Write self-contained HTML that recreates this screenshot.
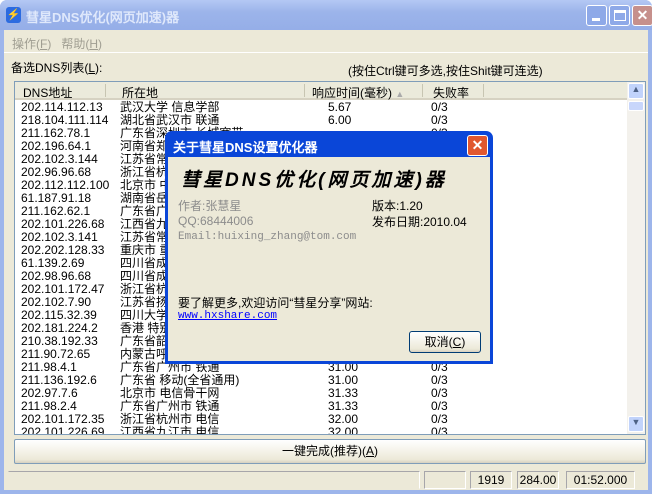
<!DOCTYPE html>
<html><head><meta charset="utf-8"><style>
*{margin:0;padding:0;box-sizing:border-box}
body{width:657px;height:494px;background:#fff;position:relative;overflow:hidden;font:12px "Liberation Sans","WenQuanYi Zen Hei",sans-serif;color:#000}
.win{position:absolute;left:0;top:0;width:652px;height:494px;background:#9db5eb;border-radius:7px 7px 0 0}
.title{position:absolute;left:0;top:0;width:652px;height:30px;background:linear-gradient(#b4c8f4,#9cb4ea 40%,#95aee8);border-radius:7px 7px 0 0}
.title .t{position:absolute;left:26px;top:7px;color:#dfe8fb;font-weight:bold;font-size:13px}
.body{position:absolute;left:4px;top:30px;width:644px;height:460px;background:#ece9d8}
.tb{position:absolute;top:5px;width:21px;height:21px;border:1px solid #fff;border-radius:3px;background:#8ea9e8;color:#fff;text-align:center;font-weight:bold}
.a{position:absolute;white-space:nowrap}
.list{position:absolute;left:14px;top:81px;width:632px;height:354px;background:#fff;border:1px solid #7f9db9;overflow:hidden}
.hdr{position:absolute;left:0;top:0;width:612px;height:18px;background:#ebeadb;border-bottom:2px solid #d6d2c2}
.row{position:absolute;left:0;height:13px;line-height:13px;font-size:12px}
.dlg{position:absolute;left:165px;top:131px;width:328px;height:233px;background:#0a46d8;border-radius:7px 7px 0 0}
.dlg .in{position:absolute;left:3px;top:26px;width:322px;height:204px;background:#ece9d8}
.btn{position:absolute;border:1px solid #003c74;border-radius:3px;background:linear-gradient(#fff,#ece9d8 85%,#d6d0c0);text-align:center}
.gray{color:#8c8c8c}
.sb{position:absolute;top:2px;height:18px;border:1px solid #a7a6aa;border-right-color:#fff;border-bottom-color:#fff;text-align:center;line-height:16px}
</style></head><body>
<div class="win">
<div class="title">
 <div style="position:absolute;left:6px;top:7px;width:15px;height:16px;background:#2c6be0;border-radius:3px;color:#fff;font-size:11px;text-align:center;line-height:16px">⚡</div>
 <div class="t">彗星DNS优化(网页加速)器</div>
 <div class="tb" style="left:586px"><div style="position:absolute;left:5px;top:12px;width:8px;height:3px;background:#fff"></div></div>
 <div class="tb" style="left:609px"><div style="position:absolute;left:4px;top:4px;width:12px;height:11px;border:1px solid #fff;border-top-width:3px"></div></div>
 <div class="tb" style="left:632px;background:#c6908c;line-height:19px;font-size:14px">✕</div>
</div>
<div class="body"></div>
</div>
<div class="a gray" style="left:12px;top:35px;color:#a09e92">操作(<u>F</u>)&nbsp;&nbsp;&nbsp;帮助(<u>H</u>)</div>
<div style="position:absolute;left:4px;top:52px;width:644px;height:1px;background:#fff"></div>
<div class="a" style="left:11px;top:59px">备选DNS列表(<u>L</u>):</div>
<div class="a" style="left:348px;top:62px">(按住Ctrl键可多选,按住Shit键可连选)</div>
<div class="list">
 <div class="hdr">
  <div class="a" style="left:8px;top:2px">DNS地址</div>
  <div class="a" style="left:107px;top:2px">所在地</div>
  <div class="a" style="left:297px;top:2px">响应时间(毫秒) <span style="color:#aaa;font-size:9px">▲</span></div>
  <div class="a" style="left:418px;top:2px">失败率</div>
  <div style="position:absolute;left:90px;top:2px;width:1px;height:13px;background:#c7c5b2"></div>
  <div style="position:absolute;left:289px;top:2px;width:1px;height:13px;background:#c7c5b2"></div>
  <div style="position:absolute;left:407px;top:2px;width:1px;height:13px;background:#c7c5b2"></div>
  <div style="position:absolute;left:468px;top:2px;width:1px;height:13px;background:#c7c5b2"></div>
 </div>
 <div style="position:absolute;left:612px;top:0;width:18px;height:352px;background:#f3f1ec">
  <div style="position:absolute;left:1px;top:1px;width:16px;height:16px;background:#c1d3fb;border:1px solid #fff;border-radius:2px;text-align:center;font-size:9px;color:#4d6185">▲</div>
  <div style="position:absolute;left:1px;top:19px;width:16px;height:10px;background:#c8d6fb;border:1px solid #fff;border-radius:2px"></div>
  <div style="position:absolute;left:1px;top:334px;width:16px;height:16px;background:#c1d3fb;border:1px solid #fff;border-radius:2px;text-align:center;font-size:9px;color:#4d6185">▼</div>
 </div>
 <div id="rows"></div>
</div>
<div class="btn" style="left:14px;top:439px;width:632px;height:25px;line-height:23px;border-color:#7f9db9;border-radius:2px">一键完成(推荐)(<u>A</u>)</div>
<div style="position:absolute;left:0;top:469px;width:648px;height:21px">
 <div class="sb" style="left:8px;width:412px;border-left-color:#ece9d8;border-bottom-color:#ece9d8"></div>
 <div class="sb" style="left:424px;width:42px"></div>
 <div class="sb" style="left:470px;width:42px">1919</div>
 <div class="sb" style="left:517px;width:42px">284.00</div>
 <div class="sb" style="left:566px;width:69px">01:52.000</div>
</div>
<div class="dlg">
 <div class="a" style="left:8px;top:6px;color:#fff;font-weight:bold;font-size:13px">关于彗星DNS设置优化器</div>
 <div style="position:absolute;left:302px;top:4px;width:21px;height:21px;border:1px solid #fff;border-radius:3px;background:#e0572f;color:#fff;text-align:center;line-height:19px;font-size:14px;font-weight:bold">✕</div>
 <div class="in">
  <div class="a" style="left:13px;top:8px;font-size:19px;font-weight:bold;font-style:italic;letter-spacing:3px">彗星DNS优化(网页加速)器</div>
  <div class="a gray" style="left:10px;top:40px">作者:张慧星</div>
  <div class="a gray" style="left:10px;top:57px">QQ:68444006</div>
  <div class="a gray" style="left:10px;top:74px;font-size:11px;font-family:'Liberation Mono',monospace">Email:huixing_zhang@tom.com</div>
  <div class="a" style="left:204px;top:40px">版本:1.20</div>
  <div class="a" style="left:204px;top:56px">发布日期:2010.04</div>
  <div class="a" style="left:10px;top:137px">要了解更多,欢迎访问“彗星分享”网站:</div>
  <div class="a" style="left:10px;top:153px;color:#00f;text-decoration:underline;font-size:11px;font-family:'Liberation Mono',monospace">www.hxshare.com</div>
  <div class="btn" style="left:241px;top:174px;width:72px;height:22px;line-height:20px">取消(<u>C</u>)</div>
 </div>
</div>
<script>
var d=[["202.114.112.13","武汉大学 信息学部","5.67"],["218.104.111.114","湖北省武汉市 联通","6.00"],["211.162.78.1","广东省深圳市 长城宽带",""],["202.196.64.1","河南省郑州市",""],["202.102.3.144","江苏省常州市",""],["202.96.96.68","浙江省杭州市",""],["202.112.112.100","北京市 中",""],["61.187.91.18","湖南省岳阳",""],["211.162.62.1","广东省广州",""],["202.101.226.68","江西省九江",""],["202.102.3.141","江苏省常州",""],["202.202.128.33","重庆市 重",""],["61.139.2.69","四川省成都",""],["202.98.96.68","四川省成都",""],["202.101.172.47","浙江省杭州",""],["202.102.7.90","江苏省扬州",""],["202.115.32.39","四川大学",""],["202.181.224.2","香港 特别",""],["210.38.192.33","广东省韶关",""],["211.90.72.65","内蒙古呼和",""],["211.98.4.1","广东省广州市 铁通","31.00"],["211.136.192.6","广东省 移动(全省通用)","31.00"],["202.97.7.6","北京市 电信骨干网","31.33"],["211.98.2.4","广东省广州市 铁通","31.33"],["202.101.172.35","浙江省杭州市 电信","32.00"],["202.101.226.69","江西省九江市 电信","32.00"]];
var h="";d.forEach(function(r,i){var y=19+i*13;h+='<div class="row" style="top:'+y+'px;left:6px">'+r[0]+'</div><div class="row" style="top:'+y+'px;left:105px">'+r[1]+'</div><div class="row" style="top:'+y+'px;left:313px">'+r[2]+'</div><div class="row" style="top:'+y+'px;left:416px">0/3</div>';});
document.getElementById("rows").innerHTML=h;
</script>
</body></html>
